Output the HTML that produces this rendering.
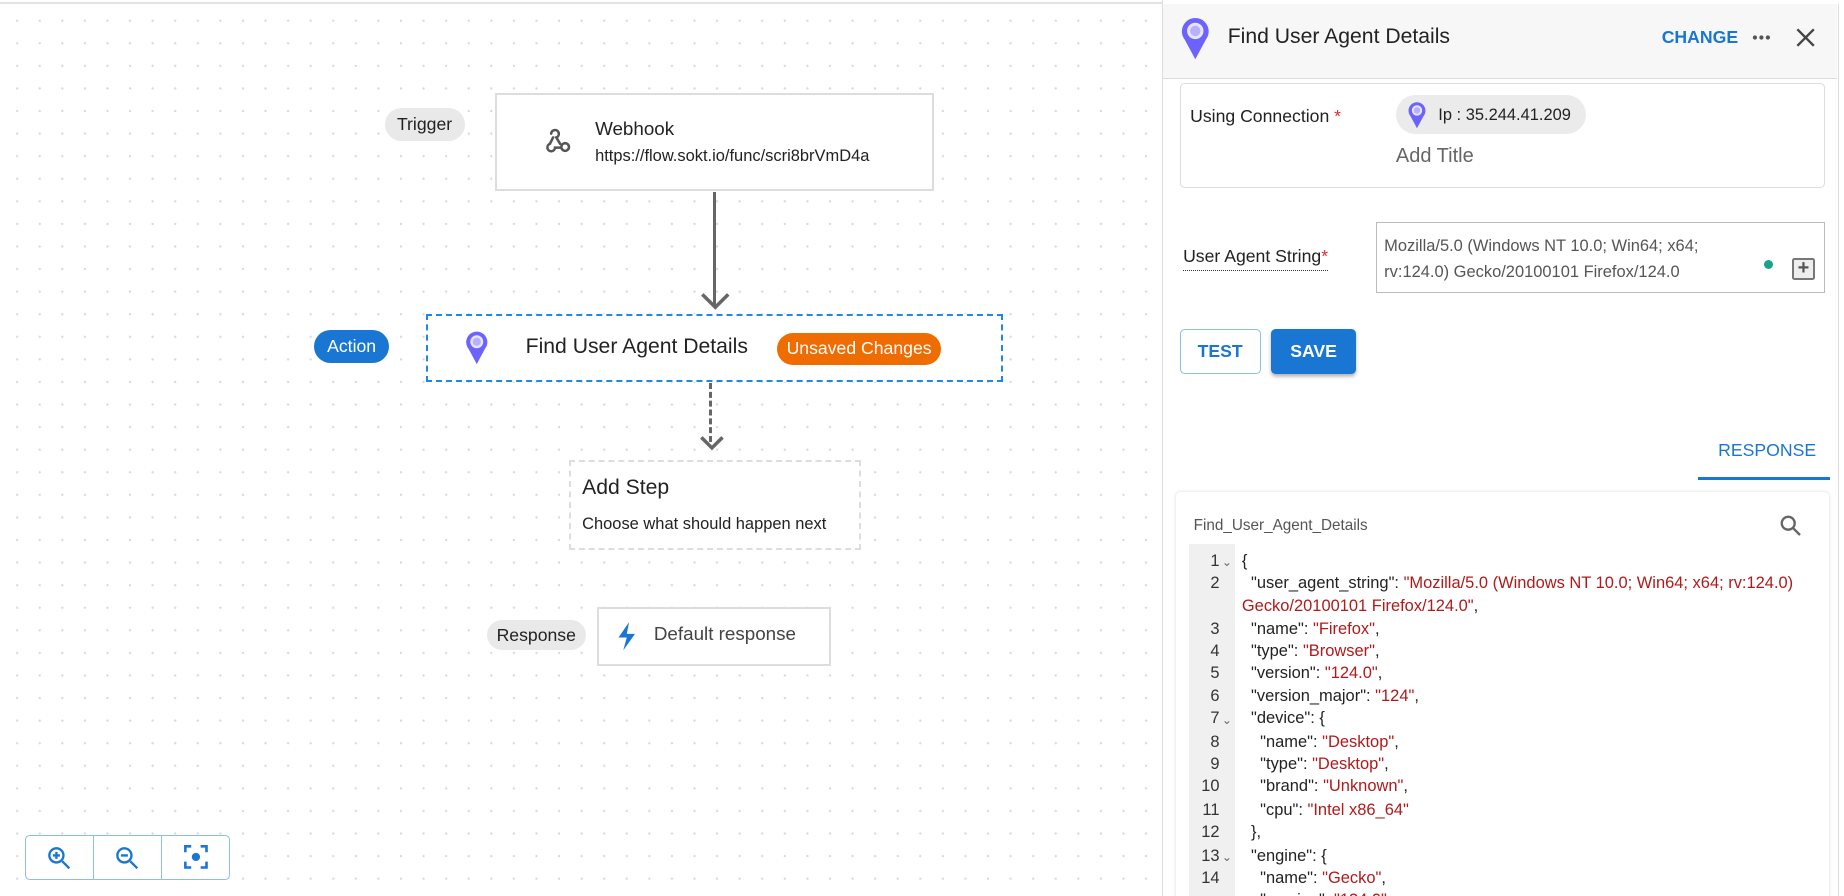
<!DOCTYPE html>
<html><head><meta charset="utf-8">
<style>
*{box-sizing:border-box;margin:0;padding:0}
html,body{width:1844px;height:896px;overflow:hidden;background:#fff}
#w{position:relative;width:1568px;height:762px;zoom:1.17602;font-family:"Liberation Sans",sans-serif;color:#222;overflow:hidden}
.a{position:absolute}
#canvas{left:0;top:0;width:988px;height:762px;background-image:radial-gradient(circle,#d9d9d9 0.8px,transparent 1.2px);background-size:19.2px 19.2px;background-position:5px 8px}
.pill{position:absolute;border-radius:14px;background:#e9e9e9;font-size:15px;text-align:center;line-height:28px}
.box{position:absolute;border:2px solid #ddd;background:#fff}
#panel{left:988px;top:0;width:580px;height:762px;border-left:1px solid #ddd;background:#fff}
.code{position:absolute;left:1056px;font-size:14px;white-space:pre;color:#222}
.s{color:#b01a1a}
.ln{position:absolute;left:1011px;width:26px;text-align:right;font-size:14px;color:#333}
.fold{position:absolute;left:1039px;font-size:10px;color:#666}
</style></head><body><div id="w">
<div class="a" style="left:0;top:2px;width:1568px;height:1px;background:#e2e2e2"></div>
<div id="canvas" class="a"></div>

<div class="pill" style="left:327px;top:92px;width:68px;">Trigger</div>
<div class="box" style="left:421px;top:79px;width:373px;height:83px"></div>
<svg class="a" style="left:460px;top:107px" width="26" height="26" viewBox="0 0 24 24" fill="none" stroke="#555" stroke-width="2" stroke-linecap="round"><path d="M9.5 9 L7 14 M8 6a3 3 0 1 1 4 3l3 5M7 14a3 3 0 1 0 4 3h5a3 3 0 1 0 0-1"/></svg>
<div class="a" style="left:506px;top:100px;font-size:16px">Webhook</div>
<div class="a" style="left:506px;top:125px;font-size:14px">https://flow.sokt.io/func/scri8brVmD4a</div>

<div class="a" style="left:606px;top:163px;width:3px;height:96px;background:#666"></div>
<svg class="a" style="left:595px;top:248px" width="26" height="16"><path d="M2 2 L13 13 L24 2" fill="none" stroke="#666" stroke-width="3"/></svg>

<div class="pill" style="left:267px;top:281px;width:64px;background:#1976d2;color:#fff">Action</div>
<div class="a" style="left:362px;top:267px;width:491px;height:58px;border:2px dashed #1e88e5;background:#fff"></div>
<svg class="a" style="left:395px;top:281px" width="20" height="30" viewBox="0 0 20 30"><path d="M10 29 L3 16 A9 9 0 1 1 17 16 Z" fill="#6c63ff"/><circle cx="10" cy="10" r="5.5" fill="#e8e6ff"/><circle cx="10" cy="10" r="3.5" fill="#b6b0ff"/></svg>
<div class="a" style="left:447px;top:285px;font-size:18px">Find User Agent Details</div>
<div class="a" style="left:661px;top:283px;width:139px;height:27px;border-radius:14px;background:#ef6c00;color:#fff;font-size:15px;line-height:27px;text-align:center">Unsaved Changes</div>

<div class="a" style="left:603px;top:326px;width:0;height:50px;border-left:3px dashed #666"></div>
<svg class="a" style="left:594px;top:370px" width="22" height="14"><path d="M2 2 L11 11 L20 2" fill="none" stroke="#666" stroke-width="3"/></svg>

<div class="a" style="left:484px;top:391px;width:248px;height:77px;border:2px dashed #ddd;background:#fff"></div>
<div class="a" style="left:495px;top:405px;font-size:18px">Add Step</div>
<div class="a" style="left:495px;top:438px;font-size:14px">Choose what should happen next</div>

<div class="pill" style="left:414px;top:527px;width:84px;height:26px;line-height:26px">Response</div>
<div class="box" style="left:508px;top:516px;width:199px;height:50px"></div>
<svg class="a" style="left:523px;top:528px" width="20" height="26" viewBox="0 0 20 26"><path d="M12 1 L3 14 H10 L7 25 L17 11 H10 Z" fill="#1976d2"/></svg>
<div class="a" style="left:556px;top:530px;font-size:16px;color:#444">Default response</div>

<div class="a" style="left:21px;top:710px;width:175px;height:38px;border:1px solid #90bde8;border-radius:4px;background:#fff"></div>
<div class="a" style="left:79px;top:710px;width:1px;height:38px;background:#90bde8"></div>
<div class="a" style="left:137px;top:710px;width:1px;height:38px;background:#90bde8"></div>
<svg class="a" style="left:40px;top:719px" width="22" height="22" viewBox="0 0 22 22" fill="none" stroke="#1976d2" stroke-width="2"><circle cx="8" cy="8" r="6"/><path d="M13 13l6 6M8 5v6M5 8h6"/></svg>
<svg class="a" style="left:98px;top:719px" width="22" height="22" viewBox="0 0 22 22" fill="none" stroke="#1976d2" stroke-width="2"><circle cx="8" cy="8" r="6"/><path d="M13 13l6 6M5 8h6"/></svg>
<svg class="a" style="left:156px;top:718px" width="22" height="22" viewBox="0 0 22 22" fill="none" stroke="#1976d2" stroke-width="2.2"><path d="M2 7V2h5M15 2h5v5M20 15v5h-5M7 20H2v-5"/><circle cx="11" cy="11" r="3.5" fill="#1976d2" stroke="none"/></svg>

<!-- panel -->
<div id="panel" class="a"></div>
<div class="a" style="left:989px;top:3px;width:573px;height:64px;background:#f7f7f7;border-bottom:1px solid #ddd"></div>
<div class="a" style="left:1563px;top:3px;width:1px;height:759px;background:#ddd"></div>
<svg class="a" style="left:1003px;top:14px" width="26" height="38" viewBox="0 0 20 30"><path d="M10 29 L3 16 A9 9 0 1 1 17 16 Z" fill="#6c63ff"/><circle cx="10" cy="10" r="5.5" fill="#e8e6ff"/><circle cx="10" cy="10" r="3.5" fill="#b6b0ff"/></svg>
<div class="a" style="left:1044px;top:21px;font-size:18px">Find User Agent Details</div>
<div class="a" style="left:1413px;top:23px;font-size:15px;font-weight:bold;color:#1976d2">CHANGE</div>
<svg class="a" style="left:1490px;top:29px" width="16" height="6"><circle cx="2.5" cy="3" r="1.8" fill="#555"/><circle cx="8" cy="3" r="1.8" fill="#555"/><circle cx="13.5" cy="3" r="1.8" fill="#555"/></svg>
<svg class="a" style="left:1526px;top:23px" width="18" height="18"><path d="M2 2L16 16M16 2L2 16" stroke="#444" stroke-width="2"/></svg>

<div class="a" style="left:1003px;top:71px;width:549px;height:89px;border:1px solid #ddd;border-radius:4px"></div>
<div class="a" style="left:1012px;top:90px;font-size:15px">Using Connection <span style="color:#d32f2f">*</span></div>
<div class="a" style="left:1187px;top:81px;width:162px;height:33px;border-radius:17px;background:#ebebeb"></div>
<svg class="a" style="left:1196px;top:86px" width="17" height="24" viewBox="0 0 20 30"><path d="M10 29 L3 16 A9 9 0 1 1 17 16 Z" fill="#6c63ff"/><circle cx="10" cy="10" r="5.5" fill="#e8e6ff"/><circle cx="10" cy="10" r="3.5" fill="#b6b0ff"/></svg>
<div class="a" style="left:1223px;top:90px;font-size:14px">Ip : 35.244.41.209</div>
<div class="a" style="left:1187px;top:123px;font-size:17px;color:#666">Add Title</div>

<div class="a" style="left:1006px;top:209px;font-size:15px;border-bottom:1px dotted #333;padding-bottom:3px">User Agent String<span style="color:#d32f2f">*</span></div>
<div class="a" style="left:1170px;top:189px;width:382px;height:60px;border:1px solid #bbb"></div>
<div class="a" style="left:1177px;top:199px;font-size:14px;color:#555;line-height:22px">Mozilla/5.0 (Windows NT 10.0; Win64; x64;<br>rv:124.0) Gecko/20100101 Firefox/124.0</div>
<div class="a" style="left:1500px;top:221px;width:8px;height:8px;border-radius:50%;background:#1aa38b"></div>
<div class="a" style="left:1524px;top:219px;width:19px;height:19px;border:2px solid #777;border-radius:2px;background:#eee;color:#555;font-size:17px;line-height:14px;text-align:center;font-weight:bold">+</div>

<div class="a" style="left:1003px;top:280px;width:69px;height:38px;border:1px solid #90bde8;border-radius:4px;color:#1976d2;font-size:15px;font-weight:bold;text-align:center;line-height:36px">TEST</div>
<div class="a" style="left:1081px;top:280px;width:72px;height:38px;border-radius:4px;background:#1976d2;color:#fff;font-size:15px;font-weight:bold;text-align:center;line-height:38px;box-shadow:0 2px 3px rgba(0,0,0,.3)">SAVE</div>

<div class="a" style="left:1461px;top:374px;font-size:15px;color:#1976d2">RESPONSE</div>
<div class="a" style="left:1444px;top:406px;width:112px;height:2px;background:#1976d2"></div>

<div class="a" style="left:1000px;top:418px;width:555px;height:360px;border-radius:4px;box-shadow:0 0 3px rgba(0,0,0,.15);background:#fff"></div>
<div class="a" style="left:1015px;top:440px;font-size:13px;color:#555">Find_User_Agent_Details</div>
<svg class="a" style="left:1514px;top:438px" width="18" height="18" fill="none" stroke="#666" stroke-width="2"><circle cx="7" cy="7" r="5.5"/><path d="M11 11l6 6"/></svg>
<div class="a" style="left:1011px;top:463px;width:39px;height:300px;background:#f0f0f0"></div>

<div class="ln" style="top:469px">1</div><div class="fold" style="top:472px">⌄</div>
<div class="ln" style="top:488px">2</div>
<div class="ln" style="top:527px">3</div>
<div class="ln" style="top:546px">4</div>
<div class="ln" style="top:565px">5</div>
<div class="ln" style="top:584px">6</div>
<div class="ln" style="top:603px">7</div><div class="fold" style="top:606px">⌄</div>
<div class="ln" style="top:623px">8</div>
<div class="ln" style="top:642px">9</div>
<div class="ln" style="top:661px">10</div>
<div class="ln" style="top:681px">11</div>
<div class="ln" style="top:700px">12</div>
<div class="ln" style="top:720px">13</div><div class="fold" style="top:723px">⌄</div>
<div class="ln" style="top:739px">14</div>

<div class="code" style="top:469px">{</div>
<div class="code" style="top:488px">  "user_agent_string": <span class="s">"Mozilla/5.0 (Windows NT 10.0; Win64; x64; rv:124.0)</span></div>
<div class="code" style="top:508px"><span class="s">Gecko/20100101 Firefox/124.0"</span>,</div>
<div class="code" style="top:527px">  "name": <span class="s">"Firefox"</span>,</div>
<div class="code" style="top:546px">  "type": <span class="s">"Browser"</span>,</div>
<div class="code" style="top:565px">  "version": <span class="s">"124.0"</span>,</div>
<div class="code" style="top:584px">  "version_major": <span class="s">"124"</span>,</div>
<div class="code" style="top:603px">  "device": {</div>
<div class="code" style="top:623px">    "name": <span class="s">"Desktop"</span>,</div>
<div class="code" style="top:642px">    "type": <span class="s">"Desktop"</span>,</div>
<div class="code" style="top:661px">    "brand": <span class="s">"Unknown"</span>,</div>
<div class="code" style="top:681px">    "cpu": <span class="s">"Intel x86_64"</span></div>
<div class="code" style="top:700px">  },</div>
<div class="code" style="top:720px">  "engine": {</div>
<div class="code" style="top:739px">    "name": <span class="s">"Gecko"</span>,</div>
<div class="code" style="top:758px">    "version": <span class="s">"124.0"</span></div>
</div></body></html>
